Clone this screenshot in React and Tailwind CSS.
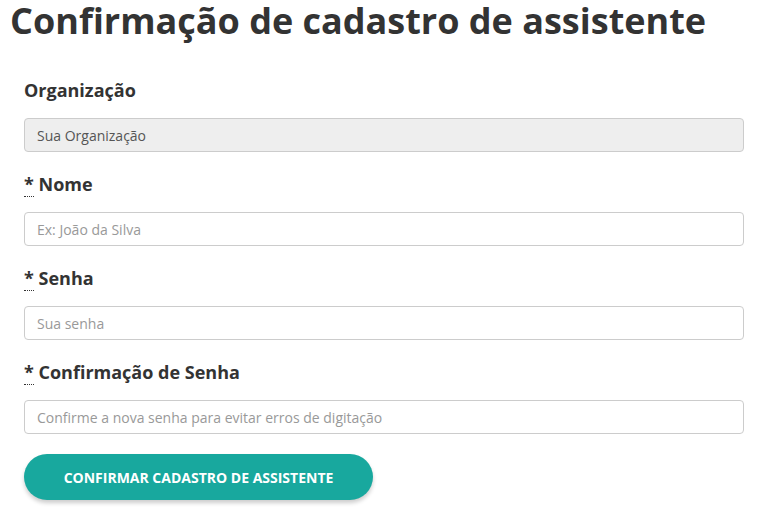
import React from "react";

const fields = [
  { label: "Nome", placeholder: "Ex: João da Silva", type: "text" },
  { label: "Senha", placeholder: "Sua senha", type: "password" },
  { label: "Confirmação de Senha", placeholder: "Confirme a nova senha para evitar erros de digitação", type: "password" },
];

const RequiredLabel = ({ children }) => (
  <label className="block text-[18px] font-bold leading-[26px] text-[#333]">
    <abbr title="obrigatório" className="no-underline border-b border-dotted border-[#333]">*</abbr> {children}
  </label>
);

export default function App() {
  return (
    <div className="min-h-screen bg-white font-['Open_Sans',sans-serif] text-[#333]">
      <div className="pl-[10px] pr-[15px]">
        <h1 className="text-[36px] font-bold leading-[42px] text-[#333]">Confirmação de cadastro de assistente</h1>
        <form className="pl-[14px] pt-[35px]" onSubmit={(e) => e.preventDefault()}>
          <div className="mb-[19px]">
            <label className="block text-[18px] font-bold leading-[26px] text-[#333]">Organização</label>
            <input
              disabled
              value="Sua Organização"
              readOnly
              className="mt-[15px] block h-[34px] w-full rounded-[4px] border border-[#ccc] bg-[#eee] px-[12px] text-[14px] text-[#555]"
            />
          </div>
          {fields.map((f) => (
            <div key={f.label} className="mb-[19px]">
              <RequiredLabel>{f.label}</RequiredLabel>
              <input
                type={f.type}
                placeholder={f.placeholder}
                className="mt-[15px] block h-[34px] w-full rounded-[4px] border border-[#ccc] bg-white px-[12px] text-[14px] placeholder:text-[#999]"
              />
            </div>
          ))}
          <button
            type="submit"
            className="mt-[1px] h-[46px] w-[349px] rounded-full bg-[#18a89e] text-[14px] font-bold uppercase text-white shadow-[0_3px_4px_rgba(0,0,0,0.2)]"
          >
            Confirmar cadastro de assistente
          </button>
        </form>
      </div>
    </div>
  );
}
